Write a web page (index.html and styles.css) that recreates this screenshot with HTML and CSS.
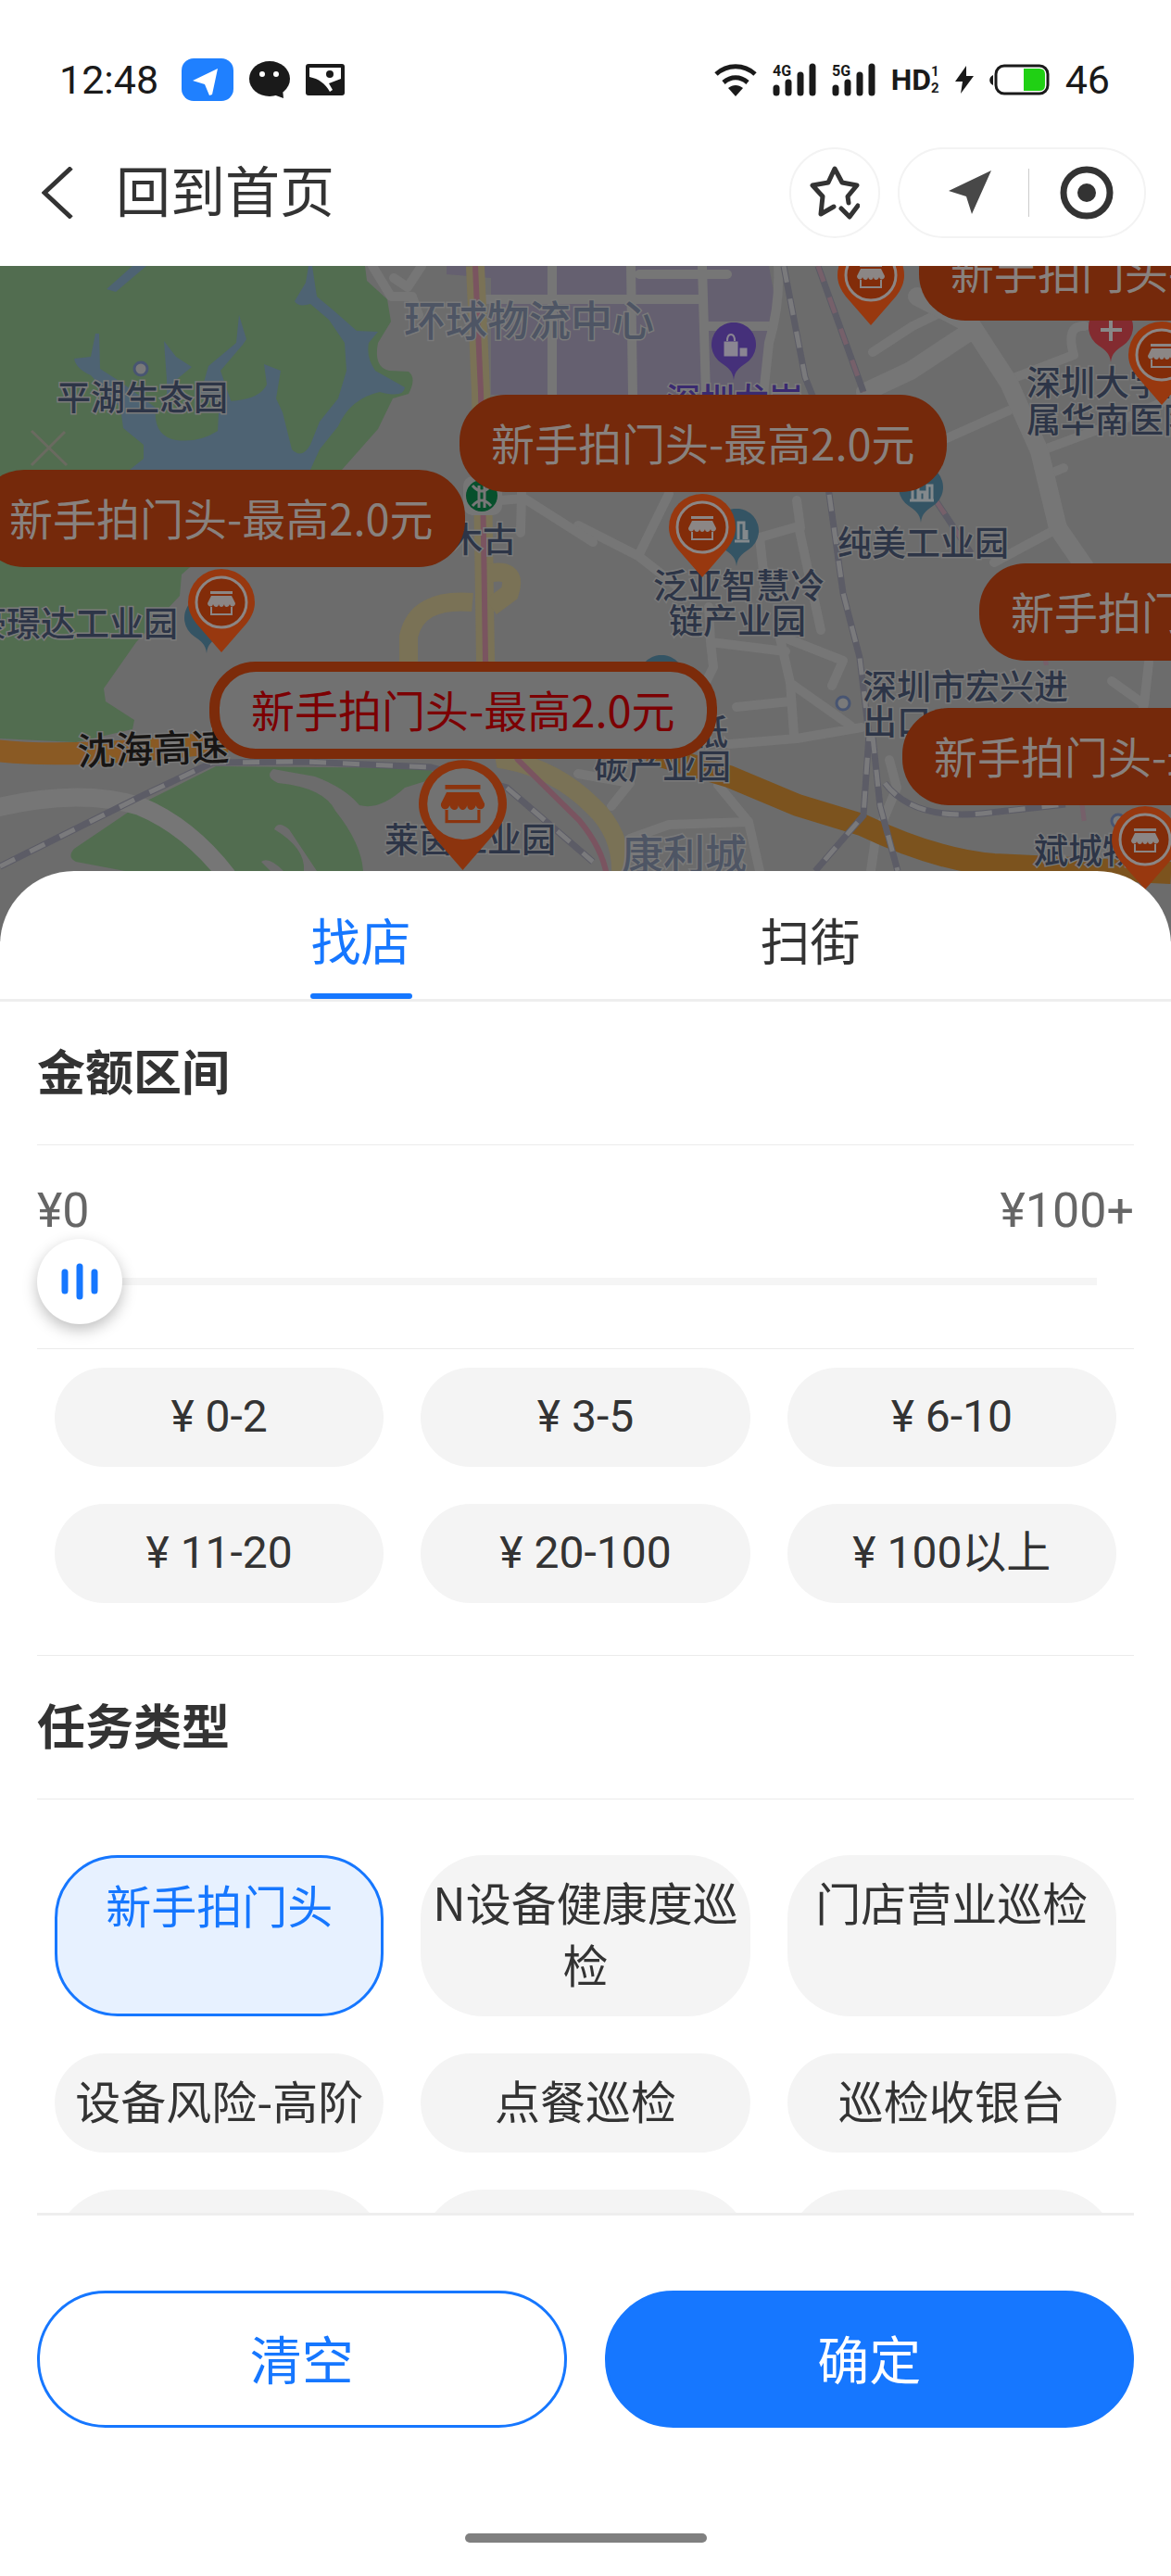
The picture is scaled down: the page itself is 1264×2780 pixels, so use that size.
FILE: index.html
```html
<!DOCTYPE html>
<html lang="zh-CN">
<head>
    <meta charset="UTF-8" />
    <meta name="viewport" content="width=device-width, initial-scale=1.0">
    <title>回到首页</title>
    <link rel="stylesheet" href="styles.css">
</head>
<body>
<!-- 公用图形 -->
<svg class="defs" width="0" height="0">
    <symbol id="shop" viewBox="0 0 30 26">
        <path d="M3 0h24v3H3z" fill="currentColor"/>
        <path d="M4 5h22l4 8c0 4-5 5-6 1c-1 4-6 4-6 0c-1 4-5 4-6 0c0 4-5 4-6 0c-1 4-6 3-6-1z" fill="currentColor"/>
        <path d="M4 17v8h22v-8" fill="none" stroke="currentColor" stroke-width="2"/>
    </symbol>
    <symbol id="pin" viewBox="0 0 72 90">
        <path d="M36 90L9 59C3 51 0 44 0 36a36 36 0 0 1 72 0c0 8-3 15-9 23z" fill="#98380f"/>
        <circle cx="36" cy="36" r="27" fill="#822c09" stroke="#8b8685" stroke-width="3"/>
        <use href="#shop" x="21" y="24" width="30" height="26"/>
    </symbol>
    <symbol id="pin-on" viewBox="0 0 72 90">
        <path d="M36 90L9 59C3 51 0 44 0 36a36 36 0 0 1 72 0c0 8-3 15-9 23z" fill="#8c340e"/>
        <circle cx="36" cy="36" r="29" fill="#727272"/>
        <use href="#shop" x="18" y="20" width="36" height="32"/>
    </symbol>
    <symbol id="drop" viewBox="0 0 48 62">
        <path d="M24 62C23 52 18 49 11 44A24 24 0 1 1 37 44C30 49 25 52 24 62z"/>
    </symbol>
</svg>

<div class="app">
    <div class="status">
        <div class="status-side">
            <span class="time">12:48</span>
            <svg width="56" height="46" viewBox="0 0 56 46"><rect width="56" height="46" rx="13" fill="#1f80ff"/><path d="M39 11L12 24l13 4l5 12l3-1z" fill="#fff"/></svg>
            <svg width="44" height="40" viewBox="0 0 44 40"><ellipse cx="22" cy="19" rx="22" ry="19" fill="#1a1a1a"/><path d="M26 36l11 4l-1-10z" fill="#1a1a1a"/><circle cx="14" cy="14" r="3" fill="#fff"/><circle cx="29" cy="14" r="3" fill="#fff"/></svg>
            <svg width="42" height="34" viewBox="0 0 42 34"><rect width="42" height="34" rx="3" fill="#1a1a1a"/><path d="M4 4h34v12l-13 5l4 7l-3 2C21 21 14 16 4 14z" fill="#fff"/><circle cx="26" cy="11" r="4" fill="#1a1a1a"/></svg>
        </div>
        <div class="status-side">
            <svg width="46" height="36" viewBox="0 0 46 36" fill="none" stroke="#1a1a1a" stroke-width="5"><path d="M2 12C14 1 32 1 44 12"/><path d="M10 21C18 14 28 14 36 21"/><path d="M15 27c5-4 11-4 16 0l-8 9z" fill="#1a1a1a" stroke="none"/></svg>
            <svg class="signal" width="47" height="36" viewBox="0 0 47 36"><text x="0" y="14">4G</text><path d="M4 27v5M17 21v11M30 13v19M43 4v28"/></svg>
            <svg class="signal" width="47" height="36" viewBox="0 0 47 36"><text x="0" y="14">5G</text><path d="M4 27v5M17 21v11M30 13v19M43 4v28"/></svg>
            <span class="hd">HD<span class="hd-num"><i>1</i><i>2</i></span></span>
            <svg width="20" height="32" viewBox="0 0 20 32"><path d="M12 1L0 18h8L6 31L20 12h-8z" fill="#1a1a1a"/></svg>
            <svg width="65" height="34" viewBox="0 0 65 34"><path d="M4 12v11C-1 21-1 14 4 12z" fill="#1a1a1a"/><rect x="7" y="2" width="56" height="30" rx="9" fill="none" stroke="#1a1a1a" stroke-width="3"/><path d="M37 5h17q6 0 6 6v12q0 6-6 6H37z" fill="#20d014"/></svg>
            <span class="level">46</span>
        </div>
    </div>

    <div class="header">
        <a class="back" href="#">
            <svg width="34" height="56" viewBox="0 0 34 56"><path d="M32 1L3 28L32 55" fill="none" stroke="#333" stroke-width="5"/></svg>
            <h1>回到首页</h1>
        </a>
        <button class="round" aria-label="收藏">
            <svg width="54" height="60" viewBox="0 0 54 60" fill="none" stroke="#333" stroke-width="5" stroke-linejoin="round" stroke-linecap="round"><path d="M26 45L12 53L14 34L3 22L20 19L27 4L35 19L51 22L41 34L42 41"/><path d="M34 47l9 9l9-12"/></svg>
        </button>
        <div class="capsule">
            <button class="locate" aria-label="定位"><svg width="46" height="48" viewBox="0 0 46 48"><path d="M46 0L0 22l19 6l6 19z" fill="#484848"/></svg></button>
            <i class="bar"></i>
            <button aria-label="关闭"><svg width="58" height="58" viewBox="0 0 58 58"><circle cx="29" cy="29" r="25" fill="none" stroke="#333" stroke-width="7"/><circle cx="29" cy="29" r="10" fill="#333"/></svg></button>
        </div>
    </div>

    <div class="map">
        <svg class="map-bg" viewBox="0 287 1264 729" preserveAspectRatio="xMinYMin slice">
            <rect y="287" width="1264" height="729" fill="#6c6c6c"/>
            <!-- 绿地 -->
            <g fill="#526d50">
                <path d="M0 287H394L396 303L418 323L422 347L408 370Q403 396 420 400L441 401Q450 408 441 425L424 430L408 463L369 507L204 613L196 620L194 643L147 693L112 743L114 757L145 777L143 787L82 801L0 797z"/>
                <path d="M233 827L465 829L469 840L437 850Q410 875 388 869Q372 850 340 838L295 830Q285 838 300 845Q350 850 362 875Q390 910 392 940H135L82 930Q72 925 80 916L151 868z"/>
            </g>
            <path d="M296 895Q300 885 312 895L342 940H328Q330 915 296 895zM282 930Q290 924 306 940H292z" fill="#6c6c6c"/>
            <!-- 水面 -->
            <g fill="#4e6373">
                <path d="M333 287L330 305L318 325Q322 332 335 328L355 345L372 370L374 400L365 430L345 455L335 480Q326 496 315 485L305 445L298 430L303 400L285 393L288 415Q280 432 245 433L236 445L235 465Q215 478 190 475Q165 470 168 440L130 412L108 398L107 360H103L98 385L80 387Q82 398 98 405L130 440L133 462L155 480L155 495L140 507H335L345 485L365 460Q378 430 410 423Q436 430 437 418L405 400Q395 385 398 370L408 358L385 357L360 335L342 320L337 287z"/>
                <path d="M258 340L255 370L225 395L215 430L250 435L238 400L262 372L266 366zM177 368L180 410V432L190 410L207 396L190 385zM143 287L115 312L125 315L158 287z"/>
            </g>
            <path d="M34 465L72 502M70 466L34 502" stroke="#6a6a60" stroke-width="3"/>
            <!-- 园区 -->
            <path d="M482 287H830L836 320L828 360L820 426H530V300L482 296z" fill="#656070"/>
            <g class="road">
                <path d="M596 287V426M681 287L683 426M758 287L762 426M525 323H756M690 296H785M765 352H830"/>
                <path d="M840 287Q842 330 830 370L824 426"/>
                <path d="M402 287L422 320L445 320L452 340M455 287L440 310L425 300"/>
                <path d="M942 380L985 352L1020 335M1089 410L1159 383Q1150 350 1171 352M1089 443L1022 473M1122 487L1195 460L1264 430M1142 570L1073 607M1136 510L1148 505"/>
                <path class="wide" d="M990 320L1048 350L1089 413L1122 487L1142 570L1171 612M1048 357L983 400L934 423"/>
                <path d="M624 567L689 600L730 632M689 600L722 533M820 580L862 568L886 680M860 540L864 570M820 580L825 625"/>
                <path d="M540 540L566 538L640 585M563 530L562 575"/>
                <path d="M765 655L767 693L770 720L760 740M767 693L848 703M840 680L853 737L918 783M853 737L857 793M787 803L860 797L930 785M795 763L853 757M844 687L910 713L898 740"/>
                <path d="M775 847L808 887L820 940M808 887L722 890L680 905M624 835L680 845L660 870"/>
                <path d="M1200 735L1235 760L1230 780M1240 715L1235 760M960 820L968 850L945 905L940 940"/>
                <path class="wide" d="M-5 872Q85 850 151 870Q204 892 245 945"/>
            </g>
            <!-- 高速 -->
            <g class="ramp">
                <path d="M513 287L519 423L522 580L524 713L545 820Q600 830 640 870Q672 900 670 945"/>
                <path d="M441 720V687Q450 645 510 650M522 620Q560 610 550 640L530 655"/>
            </g>
            <path d="M513 287L519 423L522 580L524 713Q530 770 559 820L625 885Q650 915 655 945" fill="none" stroke="#7a5460" stroke-width="6"/>
            <path d="M-5 810Q80 820 245 800" class="highway left"/>
            <path d="M700 812L787 838L861 869L930 890Q1010 928 1073 933L1264 942" class="highway"/>
            <!-- 铁路 -->
            <g>
                <path class="rail" d="M0 935L151 860L229 823L327 822L465 828L547 850L640 930M846 287L869 407L877 427L895 533L910 640L928 710L938 793L932 880L880 940M942 795L950 870L969 940M955 845Q985 885 1060 878L1150 868M883 287L932 423M1010 540L1048 597"/>
                <path class="rail dash" d="M0 935L151 860L229 823L327 822L465 828L547 850L640 930M846 287L869 407L877 427L895 533L910 640L928 710L938 793L932 880L880 940M942 795L950 870L969 940M955 845Q985 885 1060 878L1150 868"/>
                <path class="rail dash pink" d="M883 287L932 423M1010 540L1048 597M1126 700L1130 720M1168 868L1172 900"/>
            </g>
            <g class="poi-dot"><circle cx="152" cy="398" r="7"/><circle cx="910" cy="759" r="7"/><circle cx="1207" cy="886" r="7"/></g>
            <rect x="500" y="514" width="42" height="42" rx="10" fill="#767676"/>
            <circle cx="520" cy="535" r="17" fill="#07502c"/>
            <path d="M510 524Q520 536 530 524M510 546Q520 534 530 546M517 524V548M523 524V548" fill="none" stroke="#777" stroke-width="3"/>
            <use href="#drop" x="768" y="348" width="48" height="62" fill="#45307a"/>
            <path d="M781 368h16v17h-16zM798 375h9v10h-9z" fill="#8a8592" stroke="#45307a"/>
            <path d="M785 368q0-7 4-7t4 7" fill="none" stroke="#8a8592" stroke-width="2"/>
            <use href="#drop" x="1175" y="329" width="48" height="62" fill="#832b30"/>
            <path d="M1199 345v23M1188 356h23" stroke="#888" stroke-width="4"/>
            <g fill="#345464">
                <use href="#drop" x="970" y="502" width="48" height="62"/>
                <use href="#drop" x="771" y="549" width="48" height="62"/>
                <use href="#drop" x="199" y="643" width="48" height="62"/>
                <use href="#drop" x="690" y="707" width="48" height="62"/>
            </g>
            <path d="M982 540h26M985 539v-15h6v15M993 539v-8h5v8M1001 539v-15h5v15M793 584h16M797 582v-18h6v18M806 582v-10" fill="none" stroke="#83898c" stroke-width="3"/>

            <g class="label big"><text x="436" y="363">环球物流中心</text><text x="671" y="939">康利城</text></g>
            <g class="label">
                <text x="61" y="443">平湖生态园</text>
                <text x="484" y="596">木古</text>
                <text x="-30" y="687">豪璟达工业园</text>
                <text x="415" y="920">莱茵工业园</text>
                <text x="1108" y="427">深圳大学附</text>
                <text x="1108" y="467">属华南医院</text>
                <text x="904" y="600">纯美工业园</text>
                <text x="705" y="646">泛亚智慧冷</text>
                <text x="722" y="684">链产业园</text>
                <text x="931" y="755">深圳市宏兴进</text>
                <text x="931" y="793">出口</text>
                <text x="749" y="804">低</text>
                <text x="641" y="841">碳产业园</text>
                <text x="1116" y="932">斌城物</text>
                <text class="violet" x="719" y="446">深圳龙岗</text>
            </g>
            <text class="label highway-name" transform="rotate(-2 84 826)" x="84" y="826">沈海高速</text>
        </svg>

        <svg class="pin p1"><use href="#pin"/></svg>
        <svg class="pin p2"><use href="#pin"/></svg>
        <svg class="pin p3"><use href="#pin"/></svg>
        <svg class="pin p4"><use href="#pin"/></svg>
        <svg class="pin p5"><use href="#pin"/></svg>
        <svg class="pin p6 on"><use href="#pin-on"/></svg>
        <button class="tip t1">新手拍门头-最高2.0元</button>
        <button class="tip t2">新手拍门头-最高2.0元</button>
        <button class="tip t3">新手拍门头-最高2.0元</button>
        <button class="tip t4">新手拍门头-最高2.0元</button>
        <button class="tip t5">新手拍门头-最高2.0元</button>
        <button class="tip t6 on">新手拍门头-最高2.0元</button>
    </div>

    <div class="sheet">
        <div class="tabs">
            <button class="active">找店</button>
            <button>扫街</button>
        </div>
        <div class="content">
            <h2>金额区间</h2>
            <div class="range">
                <div class="range-text"><label for="money">¥0</label><span>¥100+</span></div>
                <input type="range" id="money" min="0" max="100" value="0">
            </div>
            <div class="chips price">
                <button>¥ 0-2</button>
                <button>¥ 3-5</button>
                <button>¥ 6-10</button>
                <button>¥ 11-20</button>
                <button>¥ 20-100</button>
                <button>¥ 100以上</button>
            </div>
            <h2>任务类型</h2>
            <div class="chips task">
                <button class="active">新手拍门头</button>
                <button>N设备健康度巡检</button>
                <button>门店营业巡检</button>
                <button>设备风险-高阶</button>
                <button>点餐巡检</button>
                <button>巡检收银台</button>
                <button class="two"></button>
                <button class="two"></button>
                <button class="two"></button>
            </div>
        </div>
        <div class="footer">
            <button>清空</button>
            <button class="ok">确定</button>
        </div>
        <div class="home"></div>
    </div>
</div>
</body>
</html>
```
FILE: styles.css
```css
*{
    padding:0;
    margin:0;
    box-sizing:border-box;
}
body{
    background:#fff;
    color:#333;
    font-family:"Noto Sans CJK SC",sans-serif;
}
button{
    border:0;
    background:none;
    color:inherit;
    font:inherit;
    cursor:pointer;
}
svg{
    flex:none;
}
.defs{
    position:absolute;
}
.app{
    display:flex;
    flex-direction:column;
    height:100vh;
    overflow:hidden;
}

/* 状态栏 */
.status{
    display:flex;
    justify-content:space-between;
    height:129px;
    padding:43px 66px 0 64px;
    color:#1a1a1a;
    font-family:Roboto,sans-serif;
    font-size:43px;
}
.status-side{
    display:flex;
    align-items:center;
    gap:17px;
}
.time{
    margin-right:8px;
}
.signal{
    fill:none;
    stroke:#1a1a1a;
    stroke-width:7px;
    stroke-linecap:round;
}
.signal text{
    fill:#1a1a1a;
    stroke:none;
    font-size:16px;
    font-weight:bold;
}
.hd{
    display:flex;
    align-items:center;
    font-family:"Liberation Sans Narrow",Roboto,sans-serif;
    font-size:32px;
    font-weight:bold;
}
.hd-num{
    display:flex;
    flex-direction:column;
    font-size:15px;
    line-height:18px;
}
.hd-num i{
    font-style:normal;
}

/* 标题栏 */
.header{
    display:flex;
    align-items:center;
    height:158px;
    padding:0 27px 0 45px;
}
.back{
    display:flex;
    align-items:center;
    gap:46px;
    margin-right:auto;
    color:#333;
    text-decoration:none;
}
h1{
    padding-bottom:8px;
    font-size:59px;
    font-weight:normal;
    line-height:80px;
}
.round,
.capsule{
    display:flex;
    align-items:center;
    justify-content:center;
    height:98px;
    border:2px solid #f3f3f3;
    border-radius:49px;
}
.round{
    width:98px;
    margin-right:19px;
}
.capsule{
    width:268px;
}
.capsule button{
    display:flex;
    flex:1;
    justify-content:center;
}
.capsule .locate{
    padding-left:14px;
}
.bar{
    width:1px;
    height:52px;
    background:#ccc;
}

/* 地图 */
.map{
    position:relative;
    flex:none;
    height:729px;
    overflow:hidden;
    background:#6c6c6c;
}
.map-bg{
    display:block;
    width:100%;
    height:100%;
}
.road{
    fill:none;
    stroke:#767676;
    stroke-width:10px;
    stroke-linejoin:round;
    stroke-linecap:round;
}
.wide{
    stroke-width:20px;
}
.ramp{
    fill:none;
    stroke:#7a7256;
    stroke-width:20px;
}
.highway{
    fill:none;
    stroke:#7c531e;
    stroke-width:24px;
}
.highway.left{
    stroke:#8a5a24;
}
.rail{
    fill:none;
    stroke:#5c5c66;
    stroke-width:7px;
}
.dash{
    stroke:#7a7a7c;
    stroke-width:5px;
    stroke-dasharray:18px;
}
.pink{
    stroke:#76606a;
}
.poi-dot{
    fill:#7a7a7a;
    stroke:#485572;
    stroke-width:3px;
}
.label{
    fill:#2d3547;
    stroke:#7a7a7a;
    stroke-width:3px;
    paint-order:stroke;
    font-size:37px;
    font-weight:500;
}
.label.big{
    fill:#4e5564;
    font-size:45px;
}
.label .violet{
    fill:#3a2a70;
}
.label.highway-name{
    fill:#171514;
    font-size:41px;
}
.pin{
    position:absolute;
    width:72px;
    height:90px;
    color:#8b8685;
}
.pin.on{
    width:95px;
    height:119px;
    color:#8c340e;
}
.p1{ left:904px; top:-26px; }
.p2{ left:1218px; top:60px; }
.p3{ left:722px; top:246px; }
.p4{ left:203px; top:327px; }
.p5{ left:1200px; top:583px; }
.p6{ left:452px; top:533px; }
.tip{
    position:absolute;
    height:105px;
    padding:0 34px 4px;
    border-radius:50px;
    background:#75290b;
    color:#88817e;
    font-size:47px;
    white-space:nowrap;
}
.tip.on{
    border:11px solid #7c2b0a;
    background:#717171;
    color:#7c0003;
}
.t1{ left:-24px; top:220px; }
.t2{ left:496px; top:139px; }
.t3{ left:992px; top:-46px; }
.t4{ left:1057px; top:321px; }
.t5{ left:974px; top:477px; }
.t6{ left:226px; top:427px; }

/* 筛选面板 */
.sheet{
    position:relative;
    display:flex;
    flex:1;
    flex-direction:column;
    min-height:0;
    margin-top:-76px;
    border-radius:80px 80px 0 0;
    background:#fff;
}
.tabs{
    display:flex;
    justify-content:space-around;
    padding:0 147px;
    border-bottom:3px solid #eee;
}
.tabs button{
    height:138px;
    padding:16px 1px 0;
    border-bottom:6px solid transparent;
    font-size:54px;
    line-height:80px;
}
.tabs .active{
    position:relative;
    color:#1677ff;
}
.tabs .active::after{
    content:"";
    position:absolute;
    right:0;
    bottom:-6px;
    left:0;
    height:6px;
    border-radius:3px;
    background:#1677ff;
}
.content{
    flex:1;
    min-height:0;
    padding:0 40px;
    overflow:hidden;
}
h2{
    height:155px;
    border-bottom:1px solid #ebebeb;
    font-size:52px;
    font-weight:bold;
    line-height:148px;
}
.range{
    padding:41px 0 26px;
    border-bottom:1px solid #ebebeb;
    font-family:Roboto,"Noto Sans CJK SC",sans-serif;
}
.range-text{
    display:flex;
    justify-content:space-between;
    color:#666;
    font-size:52px;
    line-height:60px;
}
.range input{
    display:block;
    width:100%;
    height:92px;
    appearance:none;
    -webkit-appearance:none;
    background:linear-gradient(#f5f5f5,#f5f5f5) center/calc(100% - 80px) 8px no-repeat;
}
.range input::-webkit-slider-thumb{
    -webkit-appearance:none;
    width:92px;
    height:92px;
    border-radius:50%;
    background:#fff url("data:image/svg+xml,%3Csvg xmlns='http://www.w3.org/2000/svg' width='40' height='40'%3E%3Cpath d='M4 10v20M20 4v32M36 10v20' stroke='%231677ff' stroke-width='7' stroke-linecap='round'/%3E%3C/svg%3E") center no-repeat;
    box-shadow:0 6px 16px rgba(0,0,0,0.25);
}
.chips{
    display:grid;
    grid-template-columns:repeat(3,1fr);
    gap:40px;
    padding:20px 19px 56px;
    font-size:48px;
    line-height:67px;
}
.chips button{
    display:flex;
    align-items:flex-start;
    justify-content:center;
    min-height:107px;
    padding:19px 14px 21px;
    border-radius:68px;
    background:#f4f4f4;
}
.price{
    border-bottom:1px solid #ebebeb;
    font-family:Roboto,"Noto Sans CJK SC",sans-serif;
}
.chips.task{
    padding-top:60px;
    font-size:49px;
}
.task button{
    padding:16px 6px 24px;
}
.chips .active{
    border:3px solid #1677ff;
    background:#e7f1ff;
    color:#1677ff;
}
.chips .two{
    min-height:174px;
}
.footer{
    display:flex;
    gap:41px;
    margin:0 40px;
    padding-top:81px;
    border-top:3px solid #eee;
}
.footer button{
    flex:1;
    height:148px;
    padding-bottom:6px;
    border:3px solid #1677ff;
    border-radius:74px;
    color:#1677ff;
    font-size:56px;
}
.footer .ok{
    background:#1677ff;
    color:#fff;
}
.home{
    width:261px;
    height:10px;
    margin:114px auto 36px;
    border-radius:5px;
    background:#808080;
}
```
